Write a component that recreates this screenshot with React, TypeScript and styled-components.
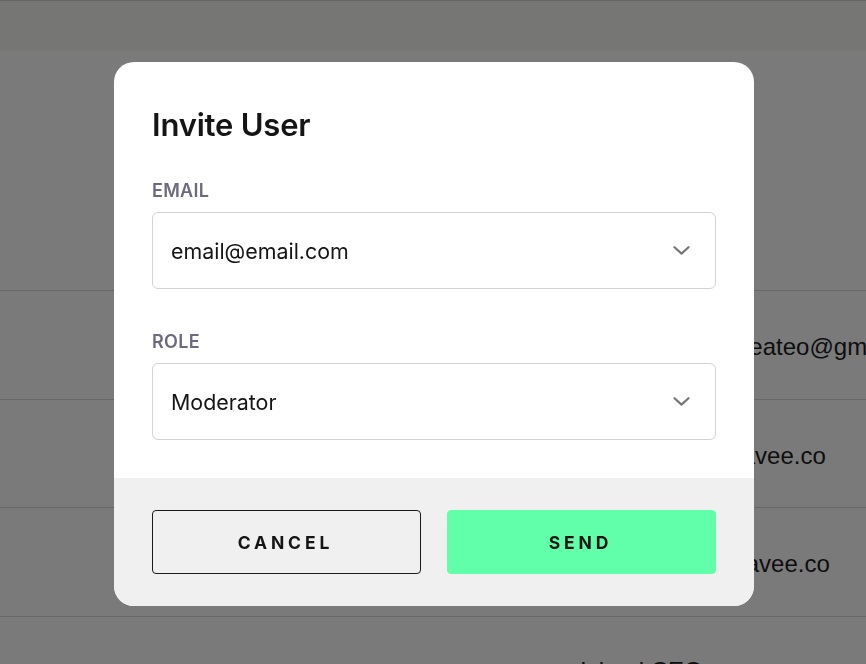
import React from "react";
import styled, { createGlobalStyle } from "styled-components";

const Global = createGlobalStyle`
  html, body { margin: 0; padding: 0; }
  body { background: #fff; font-family: "Liberation Sans", Arial, sans-serif; }
  * { box-sizing: border-box; }
`;

const Page = styled.div`
  width: 866px;
  height: 664px;
  overflow: hidden;
  background: #fff;
`;

const TopBar = styled.div`
  height: 51px;
  background: #f7f7f3;
  border-top: 1px solid #d4d4d4;
`;

const Intro = styled.div`
  height: 239px;
`;

const Row = styled.div<{ $h: number; $top?: boolean }>`
  display: grid;
  grid-template-columns: 580px 80px 1fr;
  align-items: ${(p) => (p.$top ? "start" : "center")};
  height: ${(p) => p.$h}px;
  padding-top: ${(p) => (p.$top ? 40 : 4)}px;
  border-top: 1px solid #dadada;
  font-size: 24px;
  color: #1e1e1e;
  white-space: nowrap;
`;

const Cell = styled.div<{ $col: string }>`
  grid-column: ${(p) => p.$col};
`;

const Overlay = styled.div`
  position: fixed;
  inset: 0;
  padding: 4px 0 0 2px;
  background: rgba(0, 0, 0, 0.52);
  display: flex;
  align-items: center;
  justify-content: center;
`;

const Modal = styled.div`
  width: 640px;
  border-radius: 20px;
  overflow: hidden;
  background: #fff;
  font-family: Inter, "Noto Sans", sans-serif;
  color: #151515;
`;

const Body = styled.div`
  display: flex;
  flex-direction: column;
  padding: 47px 38px 38px;
`;

const Title = styled.h2`
  margin: 0 0 41px;
  font-size: 31px;
  line-height: 32px;
  font-weight: 600;
  letter-spacing: -0.2px;
`;

const Label = styled.label`
  display: block;
  margin: 0 0 12px;
  font-size: 18px;
  line-height: 18px;
  font-weight: 600;
  color: #6d6a80;
  letter-spacing: 0.3px;
`;

const Field = styled.div<{ $last?: boolean }>`
  display: flex;
  flex-direction: column;
  margin-bottom: ${(p) => (p.$last ? 0 : 44)}px;
`;

const SelectBox = styled.div`
  display: flex;
  align-items: center;
  justify-content: space-between;
  height: 77px;
  padding: 0 25px 0 18px;
  border: 1px solid #d3d3d3;
  border-radius: 6px;
  font-size: 21.4px;
  color: #151515;
`;

const Footer = styled.div`
  display: grid;
  grid-template-columns: 1fr 1fr;
  gap: 26px;
  padding: 32px 38px;
  background: #f0f0f0;
`;

const Button = styled.button<{ $primary?: boolean }>`
  height: 64px;
  border-radius: 4px;
  border: 1px solid ${(p) => (p.$primary ? "#62ffaa" : "#1a1a1a")};
  background: ${(p) => (p.$primary ? "#62ffaa" : "transparent")};
  font-family: Inter, "Noto Sans", sans-serif;
  font-size: 17.5px;
  font-weight: 700;
  letter-spacing: 0.22em;
  padding-left: 0.22em;
  color: #151515;
  cursor: pointer;
`;

const Chevron = () => (
  <svg width="17" height="9" viewBox="0 0 17 9" fill="none">
    <path
      d="M1.5 1.2 L8.5 7.6 L15.5 1.2"
      stroke="#777"
      strokeWidth="2.2"
      strokeLinecap="round"
      strokeLinejoin="round"
    />
  </svg>
);

export default function App() {
  return (
    <>
      <Global />
      <Page>
        <TopBar />
        <Intro />
        <Row $h={109}>
          <Cell $col="3">marandreateo@gmail.com</Cell>
        </Row>
        <Row $h={108}>
          <Cell $col="3">ann@wavee.co</Cell>
        </Row>
        <Row $h={109}>
          <Cell $col="3">jose@wavee.co</Cell>
        </Row>
        <Row $h={109} $top>
          <Cell $col="2 / -1">Island CEO</Cell>
        </Row>
      </Page>
      <Overlay>
        <Modal>
          <Body>
            <Title>Invite User</Title>
            <Field>
              <Label>EMAIL</Label>
              <SelectBox>
                <span>email@email.com</span>
                <Chevron />
              </SelectBox>
            </Field>
            <Field $last>
              <Label>ROLE</Label>
              <SelectBox>
                <span>Moderator</span>
                <Chevron />
              </SelectBox>
            </Field>
          </Body>
          <Footer>
            <Button>CANCEL</Button>
            <Button $primary>SEND</Button>
          </Footer>
        </Modal>
      </Overlay>
    </>
  );
}
